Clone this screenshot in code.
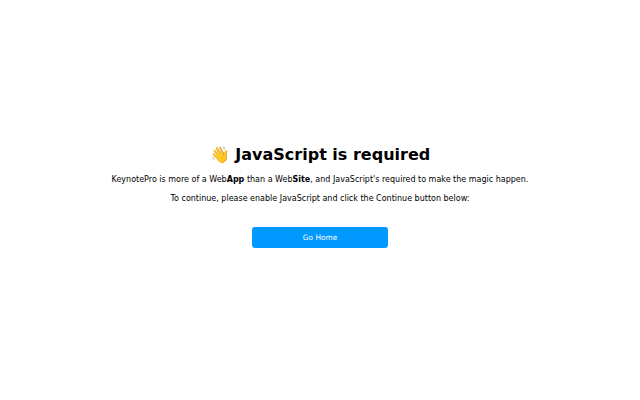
<script>
</script>

<main class="page">
  <h1><span class="wave">👋</span> JavaScript is required</h1>
  <p>KeynotePro is more of a Web<b>App</b> than a Web<b>Site</b>, and JavaScript's required to make the magic happen.</p>
  <p>To continue, please enable JavaScript and click the Continue button below:</p>
  <a class="btn" href="#home">Go Home</a>
</main>

<style>
  :global(body) {
    margin: 0;
    background: #fff;
  }
  .page {
    box-sizing: border-box;
    height: 400px;
    padding-bottom: 9px;
    display: flex;
    flex-direction: column;
    align-items: center;
    justify-content: center;
    font-family: "DejaVu Sans", sans-serif;
    color: #000;
    text-align: center;
  }
  h1 {
    margin: 1px 0 10px;
    font-size: 16px;
    line-height: 20px;
    font-weight: 700;
  }
  p {
    margin: 0 0 9px;
    font-size: 8px;
    line-height: 10px;
  }
  .btn {
    margin-top: 14px;
    width: 136px;
    height: 21px;
    line-height: 21px;
    background: #0099ff;
    border-radius: 3px;
    color: #fff;
    font-size: 7.4px;
    text-decoration: none;
  }
</style>
